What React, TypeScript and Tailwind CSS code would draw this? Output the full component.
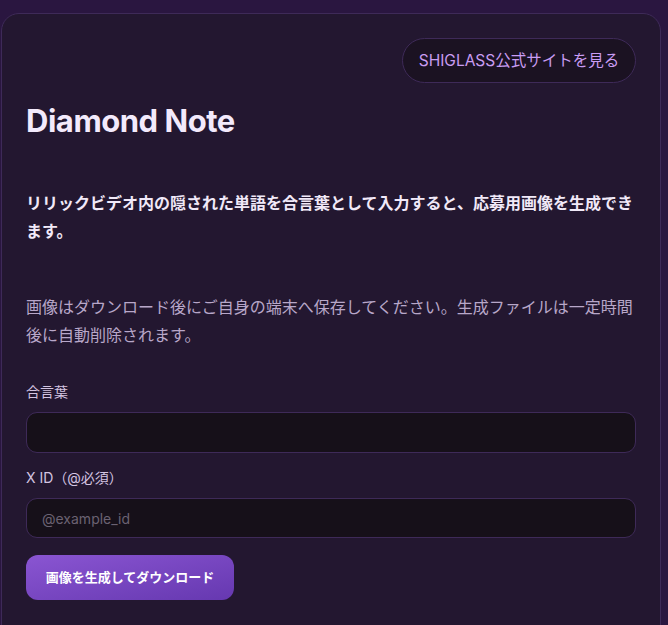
import { useState } from "react";

export default function App() {
  const [word, setWord] = useState("");
  const [xid, setXid] = useState("");

  return (
    <main
      className="min-h-screen bg-[#2a1640] pl-px pr-[7px] pt-[13px]"
      style={{ fontFamily: 'Inter, "Noto Sans CJK JP", sans-serif' }}
    >
      <section className="min-h-[640px] rounded-[18px] border border-[#3e2a58] bg-[#231730] p-6">
        <div className="flex justify-end">
          <a
            href="#"
            className="flex h-[45px] w-[234px] items-center justify-center rounded-full border border-[#3e2a58] bg-[#1b1222] text-[15.5px] text-[#c99cf2]"
          >
            SHIGLASS公式サイトを見る
          </a>
        </div>

        <h1 className="mt-[18px] text-[31px] font-bold leading-[40px] tracking-[-0.015em] text-[#f3eafc]">
          Diamond Note
        </h1>

        <p className="mt-[48px] text-[16px] font-semibold leading-[28px] text-[#f1e9f8]">
          リリックビデオ内の隠された単語を合言葉として入力すると、応募用画像を生成できます。
        </p>

        <p className="mt-[48px] text-[16px] leading-[28px] text-[#b8a7c9]">
          画像はダウンロード後にご自身の端末へ保存してください。生成ファイルは一定時間後に自動削除されます。
        </p>

        <form className="mt-[33px]" onSubmit={(e) => e.preventDefault()}>
          <label className="block text-[14px] leading-[20px] text-[#d3c4e0]">合言葉</label>
          <input
            value={word}
            onChange={(e) => setWord(e.target.value)}
            className="mt-[10px] block h-[41px] w-full rounded-[11px] border border-[#3e2a58] bg-[#161019] px-[15px] text-[14px] text-[#f1e9f8] outline-none"
          />

          <label className="mt-[15px] block text-[14px] leading-[20px] text-[#d3c4e0]">X ID（@必須）</label>
          <input
            value={xid}
            onChange={(e) => setXid(e.target.value)}
            placeholder="@example_id"
            className="mt-[10px] block h-[40px] w-full rounded-[11px] border border-[#3e2a58] bg-[#161019] px-[15px] text-[14px] text-[#f1e9f8] outline-none placeholder:text-[#6b6272]"
          />

          <button
            type="submit"
            className="mt-[17px] h-[45px] w-[208px] rounded-[12px] bg-gradient-to-br from-[#8a55d2] to-[#6638b0] text-[13px] font-bold text-white"
          >
            画像を生成してダウンロード
          </button>
        </form>
      </section>
    </main>
  );
}
